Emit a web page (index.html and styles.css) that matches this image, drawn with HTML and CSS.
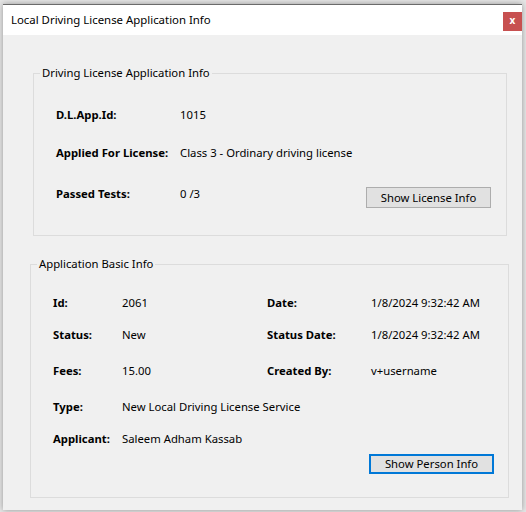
FILE: index.html
```html
<!DOCTYPE html>
<html>
<head>
<meta charset="utf-8">
<link rel="stylesheet" href="styles.css">
</head>
<body>
<div class="window">
  <div class="titlebar">
    <span class="title">Local Driving License Application Info</span>
    <span class="close">x</span>
  </div>
  <div class="content">
    <fieldset class="group g1">
      <legend>Driving License Application Info</legend>
      <div class="row r1"><span class="lbl">D.L.App.Id:</span><span>1015</span></div>
      <div class="row r2"><span class="lbl">Applied For License:</span><span>Class 3 - Ordinary driving license</span></div>
      <div class="row r3"><span class="lbl">Passed Tests:</span><span>0 /3</span><button class="btn">Show License Info</button></div>
    </fieldset>
    <fieldset class="group g2">
      <legend>Application Basic Info</legend>
      <div class="grid">
        <span class="lbl">Id:</span><span>2061</span><span class="lbl">Date:</span><span>1/8/2024 9:32:42 AM</span>
        <span class="lbl">Status:</span><span>New</span><span class="lbl">Status Date:</span><span>1/8/2024 9:32:42 AM</span>
        <span class="lbl">Fees:</span><span>15.00</span><span class="lbl">Created By:</span><span>v+username</span>
        <span class="lbl">Type:</span><span class="span3">New Local Driving License Service</span>
        <span class="lbl">Applicant:</span><span class="span3">Saleem Adham Kassab</span>
      </div>
      <div class="btnrow"><button class="btn focus">Show Person Info</button></div>
    </fieldset>
  </div>
</div>
</body>
</html>
```
FILE: styles.css
```css
html, body {
  margin: 0;
  padding: 0;
}
body {
  width: 526px;
  height: 512px;
  overflow: hidden;
  background: #e6e6e6;
  font-family: "Noto Sans", "Open Sans", sans-serif;
  font-size: 11.3px;
  color: #000;
  padding: 4px 0 0 3px;
  box-sizing: border-box;
}
.window {
  width: 519px;
  height: 506px;
  background: #f0f0f0;
  border-top: 1px solid #6b6b6b;
  box-shadow: 0 0 6px rgba(0,0,0,0.35);
  box-sizing: border-box;
}
.titlebar {
  height: 30px;
  background: #fff;
  display: flex;
  align-items: flex-start;
  justify-content: space-between;
}
.title {
  margin: 7px 0 0 8px;
  line-height: 16px;
  font-size: 11.4px;
}
.close {
  margin-top: 7px;
  width: 19px;
  height: 19px;
  background: #c75050;
  color: #fff;
  font-weight: bold;
  font-size: 10px;
  line-height: 17px;
  text-align: center;
}
.content {
  padding-top: 30px;
}
.group {
  margin: 0;
  border: 1px solid #dcdcdc;
  box-sizing: border-box;
  min-width: 0;
}
.group legend {
  padding: 0 2px;
  line-height: 16px;
  margin-left: -16px;
}
.g1 {
  margin-left: 30px;
  width: 474px;
  height: 171px;
  padding: 24px 15px 0 22px;
}
.row {
  display: grid;
  grid-template-columns: 124px 1fr auto;
  line-height: 20px;
}
.r2 { margin-top: 18px; }
.r3 { margin-top: 21px; }
.lbl { font-weight: bold; }
.btn {
  font: inherit;
  color: #000;
  background: #e1e1e1;
  border: 1px solid #adadad;
  padding: 0;
  margin: 3px 0 0 0;
  width: 125px;
  height: 21px;
  line-height: 19px;
}
.g2 {
  margin: 20px 0 0 27px;
  width: 479px;
  height: 242px;
  padding: 21px 14px 0 22px;
}
.grid {
  display: grid;
  grid-template-columns: 69px 145px 104px 1fr;
  line-height: 20px;
}
.grid > :nth-child(n+5) { margin-top: 12px; }
.grid > :nth-child(n+9) { margin-top: 16px; }
.grid > :nth-child(n+13) { margin-top: 16px; }
.grid > :nth-child(n+15) { margin-top: 12px; }
.span3 { grid-column: 2 / 5; }
.btnrow {
  display: flex;
  justify-content: flex-end;
}
.btn.focus {
  margin-top: 5px;
  border: 2px solid #0078d7;
  height: 20px;
  line-height: 16px;
}
```
